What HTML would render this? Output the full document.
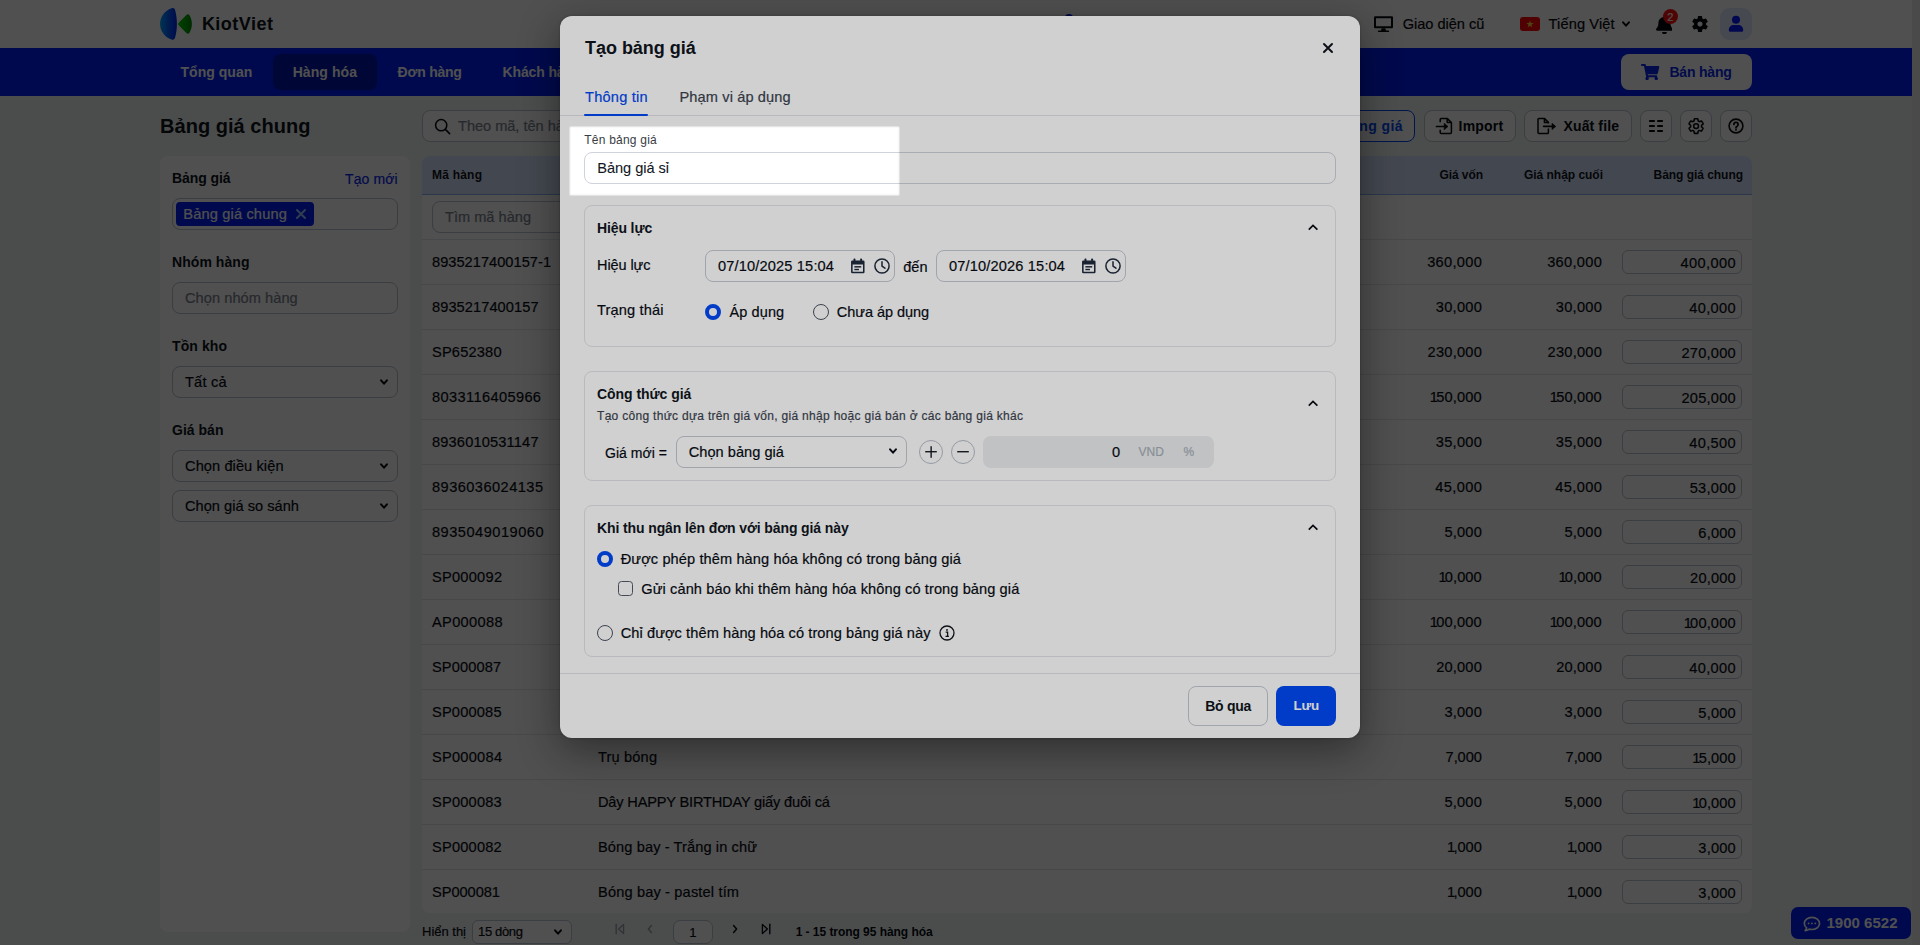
<!DOCTYPE html>
<html lang="vi"><head><meta charset="utf-8"><title>KiotViet - Bảng giá</title>
<style>

html,body{margin:0;padding:0}
body{width:1920px;height:945px;overflow:hidden;position:relative;background:#ececec;font-family:"Liberation Sans",sans-serif;font-size:14px;color:#080c14}
.a{position:absolute;display:block}
.t{white-space:nowrap;-webkit-text-stroke:0.19px currentColor}
.b{-webkit-text-stroke:0}
#app{position:absolute;left:0;top:0;width:1912px;height:945px;background:#f2f6f6;overflow:hidden}
#backdrop{position:absolute;left:0;top:0;width:1920px;height:945px;background:rgba(0,0,0,.616)}
#modal{position:absolute;left:560px;top:16px;width:800px;height:722px;background:#fff;border-radius:12px;box-shadow:0 12px 40px rgba(0,0,0,.42),0 0 3px rgba(0,0,0,.22)}
#hole{position:absolute;left:569px;top:126.4px;width:331.2px;height:69.4px;border-radius:1.5px;box-shadow:0 0 0 5000px rgba(0,0,0,.183),inset 0 0 1.6px 0.8px rgba(0,0,0,.17)}

</style></head>
<body>
<div id="app">
<div class="a" style="left:0px;top:0px;width:1912px;height:48px;background:#fff;"></div>
<svg class="a" style="left:158px;top:6px;" width="36" height="36" viewBox="0 0 36 36"><defs><linearGradient id="lg" x1="0" y1="0.5" x2="1" y2="0.5"><stop offset="0" stop-color="#00a4ff"/><stop offset="0.55" stop-color="#0058ff"/><stop offset="1" stop-color="#0026ee"/></linearGradient><linearGradient id="gg" x1="0" y1="0.5" x2="1" y2="0.5"><stop offset="0" stop-color="#00d400"/><stop offset="1" stop-color="#008c00"/></linearGradient></defs><path d="M13.6 2.3 C6.8 4.6 2.1 10.8 2.1 17.9 C2.1 25 6.8 31.2 13.6 33.5 C15.6 34.2 16.7 33.2 17.1 31.6 C19.5 23 19.5 13 17.1 4.2 C16.7 2.6 15.6 1.6 13.6 2.3 Z" fill="url(#lg)"/><path d="M20.5 17.1 L28.4 8.9 C29.4 7.9 30.8 8.1 31.5 9.3 C34.7 14.8 34.7 21.2 31.5 26.7 C30.8 27.9 29.4 28.1 28.4 27.1 L20.5 18.9 C20 18.4 20 17.6 20.5 17.1 Z" fill="url(#gg)"/></svg>
<span class="a t b" style="letter-spacing:0.473px;top:12.0px;font-size:18px;font-weight:700;color:#10151d;line-height:24px;left:201.9px;">KiotViet</span>
<svg class="a" style="left:1373px;top:15px;" width="21" height="18" viewBox="0 0 21 18"><path d="M2.2 1.2 h16.6 a1.2 1.2 0 0 1 1.2 1.2 v9.6 a1.2 1.2 0 0 1 -1.2 1.2 h-16.6 a1.2 1.2 0 0 1 -1.2 -1.2 v-9.6 a1.2 1.2 0 0 1 1.2 -1.2 z M3 3.2 v8 h15 v-8 z" fill="#080c14" fill-rule="evenodd"/><path d="M8.6 13.2 h3.8 l0.5 2.2 h-4.8 z M5.6 15.4 h9.8 a0.8 0.8 0 0 1 0 1.6 h-9.8 a0.8 0.8 0 0 1 0 -1.6 z" fill="#080c14"/></svg>
<span class="a t" style="letter-spacing:-0.023px;top:13.0px;font-size:14.6px;font-weight:400;color:#080c14;line-height:22px;left:1402.7px;">Giao diện cũ</span>
<svg class="a" style="left:1520px;top:17px;" width="20" height="14" viewBox="0 0 20 14"><rect x="0" y="0" width="20" height="14" rx="3" fill="#ff0808"/><path d="M10 3.4 l0.9 2.7 h2.8 l-2.3 1.7 l0.9 2.7 l-2.3 -1.7 l-2.3 1.7 l0.9 -2.7 l-2.3 -1.7 h2.8 z" fill="#ffda44"/></svg>
<span class="a t" style="letter-spacing:0.133px;top:13.0px;font-size:14.6px;font-weight:400;color:#080c14;line-height:22px;left:1548.5px;">Tiếng Việt</span>
<svg class="a" style="left:1620.1px;top:17.6px;" width="12" height="12" viewBox="0 0 12 12"><path d="M3.05 4.35 L6 7.65 L8.95 4.35" fill="none" stroke="#080c14" stroke-width="2.0" stroke-linecap="round" stroke-linejoin="round"/></svg>
<svg class="a" style="left:1655.6px;top:14.7px;" width="16.9" height="19.3" viewBox="0 0 448 512"><path fill="#05080d" d="M224 512c35.32 0 63.97-28.65 63.97-64H160.03c0 35.35 28.65 64 63.97 64zm215.39-149.71c-19.32-20.76-55.47-51.99-55.47-154.29 0-77.7-54.48-139.9-127.94-155.16V32c0-17.67-14.32-32-31.98-32s-31.98 14.33-31.98 32v20.84C118.56 68.1 64.08 130.3 64.08 208c0 102.3-36.15 133.53-55.47 154.29-6 6.45-8.66 14.16-8.61 21.71.11 16.4 12.98 32 32.1 32h383.8c19.12 0 32-15.6 32.1-32 .05-7.55-2.61-15.27-8.61-21.71z"/></svg>
<div class="a" style="left:1663px;top:9.3px;width:15px;height:15px;background:#ff1414;border-radius:8px;"></div>
<span class="a t" style="top:9.8px;font-size:11px;font-weight:400;color:#fff;line-height:14px;left:1667.2px;">2</span>
<svg class="a" style="left:1690px;top:14px;" width="20" height="20" viewBox="0 0 24 24"><path fill="#05080d" d="M19.14 12.94c.04-.3.06-.61.06-.94 0-.32-.02-.64-.07-.94l2.03-1.58a.49.49 0 0 0 .12-.61l-1.92-3.32a.488.488 0 0 0-.59-.22l-2.39.96c-.5-.38-1.03-.7-1.62-.94l-.36-2.54a.484.484 0 0 0-.48-.41h-3.84c-.24 0-.43.17-.47.41l-.36 2.54c-.59.24-1.13.57-1.62.94l-2.39-.96c-.22-.08-.47 0-.59.22L2.74 8.87c-.12.21-.08.47.12.61l2.03 1.58c-.05.3-.09.63-.09.94s.02.64.07.94l-2.03 1.58a.49.49 0 0 0-.12.61l1.92 3.32c.12.22.37.29.59.22l2.39-.96c.5.38 1.03.7 1.62.94l.36 2.54c.05.24.24.41.48.41h3.84c.24 0 .44-.17.47-.41l.36-2.54c.59-.24 1.13-.56 1.62-.94l2.39.96c.22.08.47 0 .59-.22l1.92-3.32c.12-.22.07-.47-.12-.61l-2.01-1.58zM12 15.1c-1.71 0-3.1-1.39-3.1-3.1s1.39-3.1 3.1-3.1 3.1 1.39 3.1 3.1-1.39 3.1-3.1 3.1z"/></svg>
<div class="a" style="left:1720px;top:8px;width:32px;height:32px;background:#e2ebff;border-radius:9px;"></div>
<svg class="a" style="left:1728px;top:16px;overflow:visible;" width="16" height="16" viewBox="0 0 16 16"><circle cx="8" cy="3.7" r="4.05" fill="#0a1eff"/><path d="M0.8 14.6 v-0.8 c0 -2.8 2.2 -4.9 5 -4.9 h4.4 c2.8 0 5 2.1 5 4.9 v0.8 a1.1 1.1 0 0 1 -1.1 1.1 h-12.2 a1.1 1.1 0 0 1 -1.1 -1.1 z" fill="#0a1eff"/></svg>
<div class="a" style="left:1064.8px;top:13.5px;width:8.4px;height:8.4px;background:#0020f8;border-radius:5px;"></div>
<div class="a" style="left:0px;top:48px;width:1912px;height:48px;background:#0020f8;"></div>
<div class="a" style="left:273px;top:54px;width:104px;height:36px;background:rgba(0,0,20,.32);border-radius:8px;"></div>
<span class="a t b" style="letter-spacing:0.032px;top:61.0px;font-size:14px;font-weight:700;color:#fff;line-height:22px;left:180.5px;">Tổng quan</span>
<span class="a t b" style="letter-spacing:0.074px;top:61.0px;font-size:14px;font-weight:700;color:#fff;line-height:22px;left:292.7px;">Hàng hóa</span>
<span class="a t b" style="letter-spacing:-0.236px;top:61.0px;font-size:14px;font-weight:700;color:#fff;line-height:22px;left:397.6px;">Đơn hàng</span>
<span class="a t b" style="letter-spacing:-0.125px;top:61.0px;font-size:14px;font-weight:700;color:#fff;line-height:22px;left:502.5px;">Khách hàng</span>
<div class="a" style="left:1621px;top:54px;width:131px;height:36px;background:#fff;border-radius:8px;"></div>
<svg class="a" style="left:1641.3px;top:63.8px;" width="18.3" height="16.3" viewBox="0 0 576 512"><path fill="#0a28f0" d="M528.12 301.319l47.273-208C578.806 78.301 567.391 64 551.99 64H159.208l-9.166-44.81C147.758 8.021 137.93 0 126.529 0H24C10.745 0 0 10.745 0 24v16c0 13.255 10.745 24 24 24h69.883l70.248 343.435C147.325 417.1 136 435.222 136 456c0 30.928 25.072 56 56 56s56-25.072 56-56c0-15.674-6.447-29.835-16.824-40h209.647C430.447 426.165 424 440.326 424 456c0 30.928 25.072 56 56 56s56-25.072 56-56c0-22.172-12.888-41.332-31.579-50.405l5.517-24.276c3.413-15.018-8.002-29.319-23.403-29.319H218.117l-6.545-32h293.145c11.206 0 20.92-7.754 23.403-18.681z"/></svg>
<span class="a t b" style="letter-spacing:-0.183px;top:61.0px;font-size:14px;font-weight:700;color:#0a28f0;line-height:22px;left:1669.4px;">Bán hàng</span>
<span class="a t b" style="letter-spacing:0.038px;top:112.0px;font-size:20px;font-weight:700;color:#10151d;line-height:28px;left:160px;">Bảng giá chung</span>
<div class="a" style="left:422px;top:110px;width:760px;height:32px;background:#fff;border-radius:8px;border:1px solid #bcc4d0;box-sizing:border-box;"></div>
<svg class="a" style="left:434px;top:118px;" width="17" height="17" viewBox="0 0 17 17"><circle cx="7.2" cy="7.2" r="5.6" fill="none" stroke="#080c14" stroke-width="1.5"/><path d="M11.4 11.4 L15.6 15.6" stroke="#080c14" stroke-width="1.6" stroke-linecap="round"/></svg>
<span class="a t" style="letter-spacing:-0.032px;top:115.0px;font-size:14.6px;font-weight:400;color:#7c8490;line-height:22px;left:458px;">Theo mã, tên hàng</span>
<div class="a" style="left:1295px;top:110px;width:120px;height:32px;background:#fff;border-radius:8px;border:1px solid #004af5;box-sizing:border-box;"></div>
<span class="a t b" style="letter-spacing:0.411px;top:115.0px;font-size:14px;font-weight:700;color:#004af5;line-height:22px;left:1340.5px;">Bảng giá</span>
<div class="a" style="left:1424px;top:110px;width:92px;height:32px;background:#fff;border-radius:8px;border:1px solid #bcc4d0;box-sizing:border-box;"></div>
<svg class="a" style="left:1434px;top:117px;" width="20" height="18" viewBox="0 0 20 18"><path d="M6.2 5.2 V2.6 a1 1 0 0 1 1 -1 h6.2 l4 4 v9.8 a1 1 0 0 1 -1 1 h-9.2 a1 1 0 0 1 -1 -1 v-2.6" fill="none" stroke="#080c14" stroke-width="1.5" stroke-linejoin="round"/><path d="M13.2 1.8 v3.8 h3.8" fill="none" stroke="#080c14" stroke-width="1.5" stroke-linejoin="round"/><path d="M2.4 9.5 H12" fill="none" stroke="#080c14" stroke-width="1.6" stroke-linecap="round"/><path d="M10.2 6.3 L14 9.5 L10.2 12.7 Z" fill="#080c14" stroke="#080c14" stroke-width="0.6" stroke-linejoin="round"/></svg>
<span class="a t b" style="letter-spacing:0.188px;top:115.0px;font-size:14px;font-weight:700;color:#080c14;line-height:22px;left:1458.6px;">Import</span>
<div class="a" style="left:1524px;top:110px;width:108px;height:32px;background:#fff;border-radius:8px;border:1px solid #bcc4d0;box-sizing:border-box;"></div>
<svg class="a" style="left:1536px;top:117px;" width="22" height="18" viewBox="0 0 22 18"><path d="M12.4 11.6 v3.8 a1 1 0 0 1 -1 1 h-8.4 a1 1 0 0 1 -1 -1 v-12.8 a1 1 0 0 1 1 -1 h5.6 l3.8 3.8 v1" fill="none" stroke="#080c14" stroke-width="1.5" stroke-linejoin="round"/><path d="M8.4 1.8 v3.8 h3.8" fill="none" stroke="#080c14" stroke-width="1.5" stroke-linejoin="round"/><path d="M7.6 9.4 H17.6" fill="none" stroke="#080c14" stroke-width="1.6" stroke-linecap="round"/><path d="M16 6.2 L19.8 9.4 L16 12.6 Z" fill="#080c14" stroke="#080c14" stroke-width="0.6" stroke-linejoin="round"/></svg>
<span class="a t b" style="letter-spacing:0.129px;top:115.0px;font-size:14px;font-weight:700;color:#080c14;line-height:22px;left:1563.5px;">Xuất file</span>
<div class="a" style="left:1640px;top:110px;width:32px;height:32px;background:#fff;border-radius:8px;border:1px solid #bcc4d0;box-sizing:border-box;"></div>
<svg class="a" style="left:1648px;top:118px;" width="16" height="16" viewBox="0 0 16 16"><rect x="1.1" y="2" width="5.7" height="2" rx="0.3" fill="#080c14"/><rect x="9.2" y="2" width="5.7" height="2" rx="0.3" fill="#080c14"/><rect x="1.1" y="7" width="5.7" height="2" rx="0.3" fill="#080c14"/><rect x="9.2" y="7" width="5.7" height="2" rx="0.3" fill="#080c14"/><rect x="1.1" y="12" width="5.7" height="2" rx="0.3" fill="#080c14"/><rect x="9.2" y="12" width="5.7" height="2" rx="0.3" fill="#080c14"/></svg>
<div class="a" style="left:1680px;top:110px;width:32px;height:32px;background:#fff;border-radius:8px;border:1px solid #bcc4d0;box-sizing:border-box;"></div>
<svg class="a" style="left:1686.5px;top:116.5px;" width="18.2" height="18.2" viewBox="0 0 24 24"><path fill="none" stroke="#080c14" stroke-width="2" stroke-linejoin="round" d="M19.14 12.94c.04-.3.06-.61.06-.94 0-.32-.02-.64-.07-.94l2.03-1.58a.49.49 0 0 0 .12-.61l-1.92-3.32a.488.488 0 0 0-.59-.22l-2.39.96c-.5-.38-1.03-.7-1.62-.94l-.36-2.54a.484.484 0 0 0-.48-.41h-3.84c-.24 0-.43.17-.47.41l-.36 2.54c-.59.24-1.13.57-1.62.94l-2.39-.96c-.22-.08-.47 0-.59.22L2.74 8.87c-.12.21-.08.47.12.61l2.03 1.58c-.05.3-.09.63-.09.94s.02.64.07.94l-2.03 1.58a.49.49 0 0 0-.12.61l1.92 3.32c.12.22.37.29.59.22l2.39-.96c.5.38 1.03.7 1.62.94l.36 2.54c.05.24.24.41.48.41h3.84c.24 0 .44-.17.47-.41l.36-2.54c.59-.24 1.13-.56 1.62-.94l2.39.96c.22.08.47 0 .59-.22l1.92-3.32c.12-.22.07-.47-.12-.61l-2.01-1.58z"/><circle cx="12" cy="12" r="3.2" fill="none" stroke="#080c14" stroke-width="2"/></svg>
<div class="a" style="left:1720px;top:110px;width:32px;height:32px;background:#fff;border-radius:8px;border:1px solid #bcc4d0;box-sizing:border-box;"></div>
<svg class="a" style="left:1728px;top:118px;" width="16" height="16" viewBox="0 0 16 16"><circle cx="8" cy="8" r="6.9" fill="none" stroke="#080c14" stroke-width="1.6"/><path d="M5.9 6.4 a2.1 2.1 0 1 1 3.2 1.8 c-0.7 0.4 -1.1 0.8 -1.1 1.6" fill="none" stroke="#080c14" stroke-width="1.8" stroke-linecap="round"/><circle cx="8" cy="11.7" r="0.95" fill="#080c14"/></svg>
<div class="a" style="left:160px;top:156px;width:250px;height:776px;background:#fff;border-radius:8px;"></div>
<span class="a t b" style="letter-spacing:-0.089px;top:168.0px;font-size:14px;font-weight:700;color:#10151d;line-height:20px;left:172px;">Bảng giá</span>
<span class="a t" style="letter-spacing:0.105px;top:167.5px;font-size:14px;font-weight:400;color:#0a28f0;line-height:22px;left:345.0px;">Tạo mới</span>
<div class="a" style="left:172px;top:198px;width:226px;height:32px;background:#fff;border-radius:8px;border:1px solid #bcc4d0;box-sizing:border-box;"></div>
<div class="a" style="left:176px;top:202px;width:138px;height:24px;background:#0020f8;border-radius:4px;"></div>
<span class="a t" style="letter-spacing:0.159px;top:203.0px;font-size:14.6px;font-weight:400;color:#fff;line-height:22px;left:183.3px;">Bảng giá chung</span>
<svg class="a" style="left:295px;top:208px;" width="12" height="12" viewBox="0 0 12 12"><path d="M2 2 L10 10 M10 2 L2 10" stroke="#9cc4ff" stroke-width="2.1" stroke-linecap="round"/></svg>
<span class="a t b" style="letter-spacing:0.062px;top:252.0px;font-size:14px;font-weight:700;color:#10151d;line-height:20px;left:172px;">Nhóm hàng</span>
<div class="a" style="left:172px;top:282px;width:226px;height:32px;background:#fff;border-radius:8px;border:1px solid #bcc4d0;box-sizing:border-box;"></div>
<span class="a t" style="letter-spacing:0.056px;top:287.0px;font-size:14.6px;font-weight:400;color:#7c8490;line-height:22px;left:185px;">Chọn nhóm hàng</span>
<span class="a t b" style="letter-spacing:0.094px;top:336.0px;font-size:14px;font-weight:700;color:#10151d;line-height:20px;left:172px;">Tồn kho</span>
<div class="a" style="left:172px;top:366px;width:226px;height:32px;background:#fff;border-radius:8px;border:1px solid #bcc4d0;box-sizing:border-box;"></div>
<span class="a t" style="letter-spacing:0.188px;top:371.0px;font-size:14.6px;font-weight:400;color:#080c14;line-height:22px;left:185px;">Tất cả</span>
<svg class="a" style="left:377.8px;top:375.5px;" width="12" height="12" viewBox="0 0 12 12"><path d="M3.05 4.35 L6 7.65 L8.95 4.35" fill="none" stroke="#080c14" stroke-width="2.0" stroke-linecap="round" stroke-linejoin="round"/></svg>
<span class="a t b" style="letter-spacing:0.023px;top:420.0px;font-size:14px;font-weight:700;color:#10151d;line-height:20px;left:172px;">Giá bán</span>
<div class="a" style="left:172px;top:450px;width:226px;height:32px;background:#fff;border-radius:8px;border:1px solid #bcc4d0;box-sizing:border-box;"></div>
<span class="a t" style="letter-spacing:0.087px;top:455.0px;font-size:14.6px;font-weight:400;color:#080c14;line-height:22px;left:185px;">Chọn điều kiện</span>
<svg class="a" style="left:377.8px;top:459.5px;" width="12" height="12" viewBox="0 0 12 12"><path d="M3.05 4.35 L6 7.65 L8.95 4.35" fill="none" stroke="#080c14" stroke-width="2.0" stroke-linecap="round" stroke-linejoin="round"/></svg>
<div class="a" style="left:172px;top:490px;width:226px;height:32px;background:#fff;border-radius:8px;border:1px solid #bcc4d0;box-sizing:border-box;"></div>
<span class="a t" style="letter-spacing:0.027px;top:495.0px;font-size:14.6px;font-weight:400;color:#080c14;line-height:22px;left:185px;">Chọn giá so sánh</span>
<svg class="a" style="left:377.8px;top:499.5px;" width="12" height="12" viewBox="0 0 12 12"><path d="M3.05 4.35 L6 7.65 L8.95 4.35" fill="none" stroke="#080c14" stroke-width="2.0" stroke-linecap="round" stroke-linejoin="round"/></svg>
<div class="a" style="left:422px;top:156px;width:1330px;height:757px;background:#fff;border-radius:8px;"></div>
<div class="a" style="left:422px;top:156px;width:1330px;height:39px;background:#d9e5ff;border-radius:8px 8px 0 0;border-bottom:1px solid #8fb2f5;box-sizing:border-box;"></div>
<span class="a t b" style="letter-spacing:0.221px;top:167.0px;font-size:12px;font-weight:700;color:#10151d;line-height:16px;left:432px;">Mã hàng</span>
<span class="a t b" style="letter-spacing:-0.192px;top:167.0px;font-size:12px;font-weight:700;color:#10151d;line-height:16px;left:598px;">Tên hàng</span>
<span class="a t b" style="letter-spacing:-0.086px;top:167.0px;font-size:12px;font-weight:700;color:#10151d;line-height:16px;left:1439.5px;">Giá vốn</span>
<span class="a t b" style="letter-spacing:-0.029px;top:167.0px;font-size:12px;font-weight:700;color:#10151d;line-height:16px;left:1524px;">Giá nhập cuối</span>
<span class="a t b" style="letter-spacing:-0.038px;top:167.0px;font-size:12px;font-weight:700;color:#10151d;line-height:16px;left:1653.5px;">Bảng giá chung</span>
<div class="a" style="left:432px;top:201px;width:156px;height:32px;background:#fff;border-radius:8px;border:1px solid #bcc4d0;box-sizing:border-box;"></div>
<span class="a t" style="letter-spacing:0.002px;top:206.0px;font-size:14.6px;font-weight:400;color:#7c8490;line-height:22px;left:445px;">Tìm mã hàng</span>
<div class="a" style="left:598px;top:201px;width:640px;height:32px;background:#fff;border-radius:8px;border:1px solid #bcc4d0;box-sizing:border-box;"></div>
<div class="a" style="left:422px;top:239px;width:1330px;height:1px;background:#e4e7eb;"></div>
<span class="a t" style="letter-spacing:0.036px;top:251.0px;font-size:14.6px;font-weight:400;color:#080c14;line-height:22px;left:432px;">8935217400157-1</span>
<span class="a t" style="top:251.0px;font-size:14.6px;font-weight:400;color:#080c14;line-height:22px;left:598px;">Bóng bay sinh nhật set vàng</span>
<span class="a t" style="letter-spacing:0.306px;top:251.0px;font-size:14.6px;font-weight:400;color:#080c14;line-height:22px;left:1427.2px;">360,000</span>
<span class="a t" style="letter-spacing:0.306px;top:251.0px;font-size:14.6px;font-weight:400;color:#080c14;line-height:22px;left:1547.2px;">360,000</span>
<div class="a" style="left:1622px;top:250px;width:120px;height:24px;background:#fff;border-radius:6px;border:1px solid #bcc4d0;box-sizing:border-box;"></div>
<span class="a t" style="letter-spacing:0.389px;top:252.0px;font-size:14.6px;font-weight:400;color:#080c14;line-height:22px;left:1680.6000000000001px;">400,000</span>
<div class="a" style="left:422px;top:284px;width:1330px;height:1px;background:#e4e7eb;"></div>
<span class="a t" style="letter-spacing:0.082px;top:296.0px;font-size:14.6px;font-weight:400;color:#080c14;line-height:22px;left:432px;">8935217400157</span>
<span class="a t" style="top:296.0px;font-size:14.6px;font-weight:400;color:#080c14;line-height:22px;left:598px;">Nến sinh nhật xoắn màu</span>
<span class="a t" style="letter-spacing:0.272px;top:296.0px;font-size:14.6px;font-weight:400;color:#080c14;line-height:22px;left:1435.8px;">30,000</span>
<span class="a t" style="letter-spacing:0.272px;top:296.0px;font-size:14.6px;font-weight:400;color:#080c14;line-height:22px;left:1555.8px;">30,000</span>
<div class="a" style="left:1622px;top:295px;width:120px;height:24px;background:#fff;border-radius:6px;border:1px solid #bcc4d0;box-sizing:border-box;"></div>
<span class="a t" style="letter-spacing:0.372px;top:297.0px;font-size:14.6px;font-weight:400;color:#080c14;line-height:22px;left:1689.2px;">40,000</span>
<div class="a" style="left:422px;top:329px;width:1330px;height:1px;background:#e4e7eb;"></div>
<span class="a t" style="letter-spacing:0.190px;top:341.0px;font-size:14.6px;font-weight:400;color:#080c14;line-height:22px;left:432px;">SP652380</span>
<span class="a t" style="top:341.0px;font-size:14.6px;font-weight:400;color:#080c14;line-height:22px;left:598px;">Set trang trí sinh nhật công chúa</span>
<span class="a t" style="letter-spacing:0.239px;top:341.0px;font-size:14.6px;font-weight:400;color:#080c14;line-height:22px;left:1427.6px;">230,000</span>
<span class="a t" style="letter-spacing:0.239px;top:341.0px;font-size:14.6px;font-weight:400;color:#080c14;line-height:22px;left:1547.6px;">230,000</span>
<div class="a" style="left:1622px;top:340px;width:120px;height:24px;background:#fff;border-radius:6px;border:1px solid #bcc4d0;box-sizing:border-box;"></div>
<span class="a t" style="letter-spacing:0.239px;top:342.0px;font-size:14.6px;font-weight:400;color:#080c14;line-height:22px;left:1681.5px;">270,000</span>
<div class="a" style="left:422px;top:374px;width:1330px;height:1px;background:#e4e7eb;"></div>
<span class="a t" style="letter-spacing:0.380px;top:386.0px;font-size:14.6px;font-weight:400;color:#080c14;line-height:22px;left:432px;">8033116405966</span>
<span class="a t" style="top:386.0px;font-size:14.6px;font-weight:400;color:#080c14;line-height:22px;left:598px;">Bóng số nhũ vàng 80cm</span>
<span class="a t" style="letter-spacing:0.156px;top:386.0px;font-size:14.6px;font-weight:400;color:#080c14;line-height:22px;left:1429.8px;"><span style="letter-spacing:-1.7px">1</span>50,000</span>
<span class="a t" style="letter-spacing:0.156px;top:386.0px;font-size:14.6px;font-weight:400;color:#080c14;line-height:22px;left:1549.8px;"><span style="letter-spacing:-1.7px">1</span>50,000</span>
<div class="a" style="left:1622px;top:385px;width:120px;height:24px;background:#fff;border-radius:6px;border:1px solid #bcc4d0;box-sizing:border-box;"></div>
<span class="a t" style="letter-spacing:0.239px;top:387.0px;font-size:14.6px;font-weight:400;color:#080c14;line-height:22px;left:1681.5px;">205,000</span>
<div class="a" style="left:422px;top:419px;width:1330px;height:1px;background:#e4e7eb;"></div>
<span class="a t" style="letter-spacing:0.172px;top:431.0px;font-size:14.6px;font-weight:400;color:#080c14;line-height:22px;left:432px;">8936010531147</span>
<span class="a t" style="top:431.0px;font-size:14.6px;font-weight:400;color:#080c14;line-height:22px;left:598px;">Pháo giấy kim tuyến</span>
<span class="a t" style="letter-spacing:0.272px;top:431.0px;font-size:14.6px;font-weight:400;color:#080c14;line-height:22px;left:1435.8px;">35,000</span>
<span class="a t" style="letter-spacing:0.272px;top:431.0px;font-size:14.6px;font-weight:400;color:#080c14;line-height:22px;left:1555.8px;">35,000</span>
<div class="a" style="left:1622px;top:430px;width:120px;height:24px;background:#fff;border-radius:6px;border:1px solid #bcc4d0;box-sizing:border-box;"></div>
<span class="a t" style="letter-spacing:0.372px;top:432.0px;font-size:14.6px;font-weight:400;color:#080c14;line-height:22px;left:1689.2px;">40,500</span>
<div class="a" style="left:422px;top:464px;width:1330px;height:1px;background:#e4e7eb;"></div>
<span class="a t" style="letter-spacing:0.457px;top:476.0px;font-size:14.6px;font-weight:400;color:#080c14;line-height:22px;left:432px;">8936036024135</span>
<span class="a t" style="top:476.0px;font-size:14.6px;font-weight:400;color:#080c14;line-height:22px;left:598px;">Mũ sinh nhật giấy (10 cái)</span>
<span class="a t" style="letter-spacing:0.372px;top:476.0px;font-size:14.6px;font-weight:400;color:#080c14;line-height:22px;left:1435.3px;">45,000</span>
<span class="a t" style="letter-spacing:0.372px;top:476.0px;font-size:14.6px;font-weight:400;color:#080c14;line-height:22px;left:1555.3px;">45,000</span>
<div class="a" style="left:1622px;top:475px;width:120px;height:24px;background:#fff;border-radius:6px;border:1px solid #bcc4d0;box-sizing:border-box;"></div>
<span class="a t" style="letter-spacing:0.272px;top:477.0px;font-size:14.6px;font-weight:400;color:#080c14;line-height:22px;left:1689.7px;">53,000</span>
<div class="a" style="left:422px;top:509px;width:1330px;height:1px;background:#e4e7eb;"></div>
<span class="a t" style="letter-spacing:0.499px;top:521.0px;font-size:14.6px;font-weight:400;color:#080c14;line-height:22px;left:432px;">8935049019060</span>
<span class="a t" style="top:521.0px;font-size:14.6px;font-weight:400;color:#080c14;line-height:22px;left:598px;">Que nến số</span>
<span class="a t" style="letter-spacing:0.217px;top:521.0px;font-size:14.6px;font-weight:400;color:#080c14;line-height:22px;left:1444.3999999999999px;">5,000</span>
<span class="a t" style="letter-spacing:0.217px;top:521.0px;font-size:14.6px;font-weight:400;color:#080c14;line-height:22px;left:1564.3999999999999px;">5,000</span>
<div class="a" style="left:1622px;top:520px;width:120px;height:24px;background:#fff;border-radius:6px;border:1px solid #bcc4d0;box-sizing:border-box;"></div>
<span class="a t" style="letter-spacing:0.217px;top:522.0px;font-size:14.6px;font-weight:400;color:#080c14;line-height:22px;left:1698.3px;">6,000</span>
<div class="a" style="left:422px;top:554px;width:1330px;height:1px;background:#e4e7eb;"></div>
<span class="a t" style="letter-spacing:0.261px;top:566.0px;font-size:14.6px;font-weight:400;color:#080c14;line-height:22px;left:432px;">SP000092</span>
<span class="a t" style="top:566.0px;font-size:14.6px;font-weight:400;color:#080c14;line-height:22px;left:598px;">Bóng chữ HAPPY BIRTHDAY</span>
<span class="a t" style="letter-spacing:0.089px;top:566.0px;font-size:14.6px;font-weight:400;color:#080c14;line-height:22px;left:1438.3999999999999px;"><span style="letter-spacing:-1.7px">1</span>0,000</span>
<span class="a t" style="letter-spacing:0.089px;top:566.0px;font-size:14.6px;font-weight:400;color:#080c14;line-height:22px;left:1558.3999999999999px;"><span style="letter-spacing:-1.7px">1</span>0,000</span>
<div class="a" style="left:1622px;top:565px;width:120px;height:24px;background:#fff;border-radius:6px;border:1px solid #bcc4d0;box-sizing:border-box;"></div>
<span class="a t" style="letter-spacing:0.192px;top:567.0px;font-size:14.6px;font-weight:400;color:#080c14;line-height:22px;left:1690.1000000000001px;">20,000</span>
<div class="a" style="left:422px;top:599px;width:1330px;height:1px;background:#e4e7eb;"></div>
<span class="a t" style="letter-spacing:0.333px;top:611.0px;font-size:14.6px;font-weight:400;color:#080c14;line-height:22px;left:432px;">AP000088</span>
<span class="a t" style="top:611.0px;font-size:14.6px;font-weight:400;color:#080c14;line-height:22px;left:598px;">Bơm bóng điện 2 vòi</span>
<span class="a t" style="letter-spacing:0.156px;top:611.0px;font-size:14.6px;font-weight:400;color:#080c14;line-height:22px;left:1429.8px;"><span style="letter-spacing:-1.7px">1</span>00,000</span>
<span class="a t" style="letter-spacing:0.156px;top:611.0px;font-size:14.6px;font-weight:400;color:#080c14;line-height:22px;left:1549.8px;"><span style="letter-spacing:-1.7px">1</span>00,000</span>
<div class="a" style="left:1622px;top:610px;width:120px;height:24px;background:#fff;border-radius:6px;border:1px solid #bcc4d0;box-sizing:border-box;"></div>
<span class="a t" style="letter-spacing:0.156px;top:612.0px;font-size:14.6px;font-weight:400;color:#080c14;line-height:22px;left:1683.7px;"><span style="letter-spacing:-1.7px">1</span>00,000</span>
<div class="a" style="left:422px;top:644px;width:1330px;height:1px;background:#e4e7eb;"></div>
<span class="a t" style="letter-spacing:0.118px;top:656.0px;font-size:14.6px;font-weight:400;color:#080c14;line-height:22px;left:432px;">SP000087</span>
<span class="a t" style="top:656.0px;font-size:14.6px;font-weight:400;color:#080c14;line-height:22px;left:598px;">Rèm kim tuyến trang trí</span>
<span class="a t" style="letter-spacing:0.192px;top:656.0px;font-size:14.6px;font-weight:400;color:#080c14;line-height:22px;left:1436.2px;">20,000</span>
<span class="a t" style="letter-spacing:0.192px;top:656.0px;font-size:14.6px;font-weight:400;color:#080c14;line-height:22px;left:1556.2px;">20,000</span>
<div class="a" style="left:1622px;top:655px;width:120px;height:24px;background:#fff;border-radius:6px;border:1px solid #bcc4d0;box-sizing:border-box;"></div>
<span class="a t" style="letter-spacing:0.372px;top:657.0px;font-size:14.6px;font-weight:400;color:#080c14;line-height:22px;left:1689.2px;">40,000</span>
<div class="a" style="left:422px;top:689px;width:1330px;height:1px;background:#e4e7eb;"></div>
<span class="a t" style="letter-spacing:0.190px;top:701.0px;font-size:14.6px;font-weight:400;color:#080c14;line-height:22px;left:432px;">SP000085</span>
<span class="a t" style="top:701.0px;font-size:14.6px;font-weight:400;color:#080c14;line-height:22px;left:598px;">Keo dán bóng</span>
<span class="a t" style="letter-spacing:0.217px;top:701.0px;font-size:14.6px;font-weight:400;color:#080c14;line-height:22px;left:1444.3999999999999px;">3,000</span>
<span class="a t" style="letter-spacing:0.217px;top:701.0px;font-size:14.6px;font-weight:400;color:#080c14;line-height:22px;left:1564.3999999999999px;">3,000</span>
<div class="a" style="left:1622px;top:700px;width:120px;height:24px;background:#fff;border-radius:6px;border:1px solid #bcc4d0;box-sizing:border-box;"></div>
<span class="a t" style="letter-spacing:0.217px;top:702.0px;font-size:14.6px;font-weight:400;color:#080c14;line-height:22px;left:1698.3px;">5,000</span>
<div class="a" style="left:422px;top:734px;width:1330px;height:1px;background:#e4e7eb;"></div>
<span class="a t" style="letter-spacing:0.261px;top:746.0px;font-size:14.6px;font-weight:400;color:#080c14;line-height:22px;left:432px;">SP000084</span>
<span class="a t" style="letter-spacing:0.161px;top:746.0px;font-size:14.6px;font-weight:400;color:#080c14;line-height:22px;left:598px;">Trụ bóng</span>
<span class="a t" style="letter-spacing:-0.083px;top:746.0px;font-size:14.6px;font-weight:400;color:#080c14;line-height:22px;left:1445.6px;">7,000</span>
<span class="a t" style="letter-spacing:-0.083px;top:746.0px;font-size:14.6px;font-weight:400;color:#080c14;line-height:22px;left:1565.6px;">7,000</span>
<div class="a" style="left:1622px;top:745px;width:120px;height:24px;background:#fff;border-radius:6px;border:1px solid #bcc4d0;box-sizing:border-box;"></div>
<span class="a t" style="letter-spacing:0.089px;top:747.0px;font-size:14.6px;font-weight:400;color:#080c14;line-height:22px;left:1692.3px;"><span style="letter-spacing:-1.7px">1</span>5,000</span>
<div class="a" style="left:422px;top:779px;width:1330px;height:1px;background:#e4e7eb;"></div>
<span class="a t" style="letter-spacing:0.218px;top:791.0px;font-size:14.6px;font-weight:400;color:#080c14;line-height:22px;left:432px;">SP000083</span>
<span class="a t" style="letter-spacing:-0.180px;top:791.0px;font-size:14.6px;font-weight:400;color:#080c14;line-height:22px;left:598px;">Dây HAPPY BIRTHDAY giấy đuôi cá</span>
<span class="a t" style="letter-spacing:0.217px;top:791.0px;font-size:14.6px;font-weight:400;color:#080c14;line-height:22px;left:1444.3999999999999px;">5,000</span>
<span class="a t" style="letter-spacing:0.217px;top:791.0px;font-size:14.6px;font-weight:400;color:#080c14;line-height:22px;left:1564.3999999999999px;">5,000</span>
<div class="a" style="left:1622px;top:790px;width:120px;height:24px;background:#fff;border-radius:6px;border:1px solid #bcc4d0;box-sizing:border-box;"></div>
<span class="a t" style="letter-spacing:0.089px;top:792.0px;font-size:14.6px;font-weight:400;color:#080c14;line-height:22px;left:1692.3px;"><span style="letter-spacing:-1.7px">1</span>0,000</span>
<div class="a" style="left:422px;top:824px;width:1330px;height:1px;background:#e4e7eb;"></div>
<span class="a t" style="letter-spacing:0.218px;top:836.0px;font-size:14.6px;font-weight:400;color:#080c14;line-height:22px;left:432px;">SP000082</span>
<span class="a t" style="letter-spacing:0.109px;top:836.0px;font-size:14.6px;font-weight:400;color:#080c14;line-height:22px;left:598px;">Bóng bay - Trắng in chữ</span>
<span class="a t" style="letter-spacing:-0.007px;top:836.0px;font-size:14.6px;font-weight:400;color:#080c14;line-height:22px;left:1447.0px;"><span style="letter-spacing:-1.7px">1</span>,000</span>
<span class="a t" style="letter-spacing:-0.007px;top:836.0px;font-size:14.6px;font-weight:400;color:#080c14;line-height:22px;left:1567.0px;"><span style="letter-spacing:-1.7px">1</span>,000</span>
<div class="a" style="left:1622px;top:835px;width:120px;height:24px;background:#fff;border-radius:6px;border:1px solid #bcc4d0;box-sizing:border-box;"></div>
<span class="a t" style="letter-spacing:0.217px;top:837.0px;font-size:14.6px;font-weight:400;color:#080c14;line-height:22px;left:1698.3px;">3,000</span>
<div class="a" style="left:422px;top:869px;width:1330px;height:1px;background:#e4e7eb;"></div>
<span class="a t" style="letter-spacing:-0.025px;top:881.0px;font-size:14.6px;font-weight:400;color:#080c14;line-height:22px;left:432px;">SP000081</span>
<span class="a t" style="letter-spacing:0.155px;top:881.0px;font-size:14.6px;font-weight:400;color:#080c14;line-height:22px;left:598px;">Bóng bay - pastel tím</span>
<span class="a t" style="letter-spacing:-0.007px;top:881.0px;font-size:14.6px;font-weight:400;color:#080c14;line-height:22px;left:1447.0px;"><span style="letter-spacing:-1.7px">1</span>,000</span>
<span class="a t" style="letter-spacing:-0.007px;top:881.0px;font-size:14.6px;font-weight:400;color:#080c14;line-height:22px;left:1567.0px;"><span style="letter-spacing:-1.7px">1</span>,000</span>
<div class="a" style="left:1622px;top:880px;width:120px;height:24px;background:#fff;border-radius:6px;border:1px solid #bcc4d0;box-sizing:border-box;"></div>
<span class="a t" style="letter-spacing:0.217px;top:882.0px;font-size:14.6px;font-weight:400;color:#080c14;line-height:22px;left:1698.3px;">3,000</span>
<span class="a t" style="letter-spacing:-0.011px;top:923.0px;font-size:13px;font-weight:400;color:#080c14;line-height:18px;left:422px;">Hiển thị</span>
<div class="a" style="left:472px;top:920px;width:100px;height:24px;background:#fff;border-radius:6px;border:1px solid #bcc4d0;box-sizing:border-box;"></div>
<span class="a t" style="letter-spacing:-0.333px;top:923.0px;font-size:13px;font-weight:400;color:#080c14;line-height:18px;left:478px;">15 dòng</span>
<svg class="a" style="left:552.4px;top:925.8px;" width="12" height="12" viewBox="0 0 12 12"><path d="M3.05 4.35 L6 7.65 L8.95 4.35" fill="none" stroke="#080c14" stroke-width="2.0" stroke-linecap="round" stroke-linejoin="round"/></svg>
<svg class="a" style="left:614px;top:923.4px;" width="12" height="12" viewBox="0 0 12 12"><path d="M2.2 1.2 V10.8" stroke="#9aa1ab" stroke-width="1.4" stroke-linecap="round"/><path d="M9.6 1.4 L4.6 6 L9.6 10.6 Z" fill="none" stroke="#9aa1ab" stroke-width="1.3" stroke-linejoin="round"/></svg>
<svg class="a" style="left:644px;top:923.4px;" width="12" height="12" viewBox="0 0 12 12"><path d="M7.4 2.6 L4.4 6 L7.4 9.4" fill="none" stroke="#9aa1ab" stroke-width="1.5" stroke-linecap="round" stroke-linejoin="round"/></svg>
<div class="a" style="left:673px;top:920px;width:40px;height:24px;background:#fff;border-radius:7px;border:1px solid #bcc4d0;box-sizing:border-box;"></div>
<span class="a t" style="top:924.0px;font-size:13px;font-weight:400;color:#080c14;line-height:18px;left:689.2px;">1</span>
<svg class="a" style="left:729.4px;top:923.4px;" width="12" height="12" viewBox="0 0 12 12"><path d="M4.6 2.6 L7.6 6 L4.6 9.4" fill="none" stroke="#080c14" stroke-width="1.5" stroke-linecap="round" stroke-linejoin="round"/></svg>
<svg class="a" style="left:759.7px;top:923.4px;" width="12" height="12" viewBox="0 0 12 12"><path d="M9.8 1.2 V10.8" stroke="#080c14" stroke-width="1.4" stroke-linecap="round"/><path d="M2.4 1.4 L7.4 6 L2.4 10.6 Z" fill="none" stroke="#080c14" stroke-width="1.3" stroke-linejoin="round"/></svg>
<span class="a t b" style="letter-spacing:-0.045px;top:924.0px;font-size:12px;font-weight:700;color:#080c14;line-height:16px;left:795.7px;">1 - 15 trong 95 hàng hóa</span>
<div class="a" style="left:1791px;top:907px;width:120px;height:32px;background:#0020f8;border-radius:7px;"></div>
<svg class="a" style="left:1803.4px;top:915.6px;" width="18.6" height="16.7" viewBox="0 0 20 18"><path d="M9.6 1.4 c4.6 0 8.2 2.9 8.2 6.6 s-3.6 6.6 -8.2 6.6 c-1 0 -2 -0.15 -2.9 -0.4 c-1.1 0.8 -2.6 1.5 -4.4 1.6 c0.8 -0.9 1.4 -1.9 1.6 -2.9 c-1.5 -1.2 -2.5 -2.9 -2.5 -4.9 c0 -3.7 3.6 -6.6 8.2 -6.6 z" fill="none" stroke="#fff" stroke-width="1.8" stroke-linejoin="round"/><circle cx="6" cy="8" r="1" fill="#fff"/><circle cx="9.6" cy="8" r="1" fill="#fff"/><circle cx="13.2" cy="8" r="1" fill="#fff"/></svg>
<span class="a t b" style="letter-spacing:0.012px;top:912.0px;font-size:15px;font-weight:700;color:#fff;line-height:22px;left:1826.5px;">1900 6522</span>
</div>
<div id="backdrop"></div>
<div id="modal">
<span class="a t b" style="letter-spacing:-0.029px;top:20.0px;font-size:18px;font-weight:700;color:#10151d;line-height:24px;left:25px;">Tạo bảng giá</span>
<svg class="a" style="left:761px;top:25px;" width="14" height="14" viewBox="0 0 14 14"><path d="M3 3 L11 11 M11 3 L3 11" stroke="#10151d" stroke-width="2" stroke-linecap="round"/></svg>
<span class="a t" style="letter-spacing:0.230px;top:70.0px;font-size:14.6px;font-weight:400;color:#004af5;line-height:22px;left:25px;">Thông tin</span>
<span class="a t" style="letter-spacing:0.119px;top:70.0px;font-size:14.6px;font-weight:400;color:#3c4450;line-height:22px;left:119.5px;">Phạm vi áp dụng</span>
<div class="a" style="left:0px;top:99px;width:800px;height:1px;background:#dfe2e6;"></div>
<div class="a" style="left:24px;top:97.5px;width:64px;height:2.5px;background:#004af5;border-radius:1px;"></div>
<span class="a t" style="letter-spacing:0.213px;top:116.0px;font-size:12px;font-weight:400;color:#383c44;line-height:16px;left:24.299999999999955px;-webkit-text-stroke:0;">Tên bảng giá</span>
<div class="a" style="left:24px;top:136px;width:752px;height:32px;background:#fff;border-radius:8px;border:1px solid #cfd4dc;box-sizing:border-box;"></div>
<span class="a t" style="letter-spacing:-0.052px;top:141.0px;font-size:14.6px;font-weight:400;color:#121824;line-height:22px;left:37.299999999999955px;-webkit-text-stroke:0.08px currentColor;">Bảng giá sỉ</span>
<div class="a" style="left:24px;top:189px;width:752px;height:142px;background:#fff;border-radius:8px;border:1px solid #e2e5e9;box-sizing:border-box;"></div>
<span class="a t b" style="letter-spacing:-0.121px;top:202.0px;font-size:14px;font-weight:700;color:#10151d;line-height:20px;left:37px;">Hiệu lực</span>
<svg class="a" style="left:747.2px;top:205.4px;" width="12" height="12" viewBox="0 0 12 12"><path d="M1.8 8.7 L6 4.5 L10.4 8.7" fill="none" stroke="#080c14" stroke-width="1.65" stroke-linecap="butt" stroke-linejoin="miter"/></svg>
<span class="a t" style="letter-spacing:-0.076px;top:238.0px;font-size:14.5px;font-weight:400;color:#080c14;line-height:22px;left:37px;">Hiệu lực</span>
<div class="a" style="left:145px;top:234px;width:190px;height:32px;background:#fff;border-radius:8px;border:1px solid #c5cbd3;box-sizing:border-box;"></div>
<span class="a t" style="letter-spacing:0.158px;top:239.0px;font-size:14.6px;font-weight:400;color:#080c14;line-height:22px;left:158px;">07/10/2025 15:04</span>
<svg class="a" style="left:290.29999999999995px;top:241.60000000000002px;" width="15.6" height="16.6" viewBox="0 0 15 16"><path d="M2.2 2.4 h10.6 a1.2 1.2 0 0 1 1.2 1.2 v10 a1.2 1.2 0 0 1 -1.2 1.2 h-10.6 a1.2 1.2 0 0 1 -1.2 -1.2 v-10 a1.2 1.2 0 0 1 1.2 -1.2 z M2.5 6.2 v7.1 h10 v-7.1 z" fill="#1e2a3c" fill-rule="evenodd"/><rect x="3.4" y="0.6" width="1.8" height="3" rx="0.6" fill="#1e2a3c"/><rect x="9.8" y="0.6" width="1.8" height="3" rx="0.6" fill="#1e2a3c"/><rect x="4.2" y="7.8" width="6.6" height="1.4" fill="#1e2a3c"/><rect x="4.2" y="10.4" width="4.4" height="1.4" fill="#1e2a3c"/></svg>
<svg class="a" style="left:314px;top:242px;" width="16" height="16" viewBox="0 0 16 16"><circle cx="8" cy="8" r="7.1" fill="none" stroke="#1e2a3c" stroke-width="1.5"/><path d="M8 3.8 V8.2 L10.9 10.2" fill="none" stroke="#1e2a3c" stroke-width="1.5" stroke-linecap="round" stroke-linejoin="round"/></svg>
<div class="a" style="left:376px;top:234px;width:190px;height:32px;background:#fff;border-radius:8px;border:1px solid #c5cbd3;box-sizing:border-box;"></div>
<span class="a t" style="letter-spacing:0.158px;top:239.0px;font-size:14.6px;font-weight:400;color:#080c14;line-height:22px;left:389px;">07/10/2026 15:04</span>
<svg class="a" style="left:521.3px;top:241.60000000000002px;" width="15.6" height="16.6" viewBox="0 0 15 16"><path d="M2.2 2.4 h10.6 a1.2 1.2 0 0 1 1.2 1.2 v10 a1.2 1.2 0 0 1 -1.2 1.2 h-10.6 a1.2 1.2 0 0 1 -1.2 -1.2 v-10 a1.2 1.2 0 0 1 1.2 -1.2 z M2.5 6.2 v7.1 h10 v-7.1 z" fill="#1e2a3c" fill-rule="evenodd"/><rect x="3.4" y="0.6" width="1.8" height="3" rx="0.6" fill="#1e2a3c"/><rect x="9.8" y="0.6" width="1.8" height="3" rx="0.6" fill="#1e2a3c"/><rect x="4.2" y="7.8" width="6.6" height="1.4" fill="#1e2a3c"/><rect x="4.2" y="10.4" width="4.4" height="1.4" fill="#1e2a3c"/></svg>
<svg class="a" style="left:545px;top:242px;" width="16" height="16" viewBox="0 0 16 16"><circle cx="8" cy="8" r="7.1" fill="none" stroke="#1e2a3c" stroke-width="1.5"/><path d="M8 3.8 V8.2 L10.9 10.2" fill="none" stroke="#1e2a3c" stroke-width="1.5" stroke-linecap="round" stroke-linejoin="round"/></svg>
<span class="a t" style="letter-spacing:-0.002px;top:240.0px;font-size:14.5px;font-weight:400;color:#080c14;line-height:22px;left:343.29999999999995px;">đến</span>
<span class="a t" style="letter-spacing:0.159px;top:283.0px;font-size:14.6px;font-weight:400;color:#080c14;line-height:22px;left:37px;">Trạng thái</span>
<div class="a" style="left:145px;top:288px;width:16px;height:16px;background:#fff;border-radius:8px;border:4.5px solid #004af5;box-sizing:border-box;"></div>
<span class="a t" style="letter-spacing:0.078px;top:285.0px;font-size:14.5px;font-weight:400;color:#080c14;line-height:22px;left:169.60000000000002px;">Áp dụng</span>
<div class="a" style="left:252.5px;top:288px;width:16px;height:16px;background:#fff;border-radius:8px;border:1px solid #4a5360;box-sizing:border-box;"></div>
<span class="a t" style="letter-spacing:-0.050px;top:285.0px;font-size:14.5px;font-weight:400;color:#080c14;line-height:22px;left:276.79999999999995px;">Chưa áp dụng</span>
<div class="a" style="left:24px;top:355px;width:752px;height:110px;background:#fff;border-radius:8px;border:1px solid #e2e5e9;box-sizing:border-box;"></div>
<span class="a t b" style="letter-spacing:-0.052px;top:368.0px;font-size:14px;font-weight:700;color:#10151d;line-height:20px;left:37px;">Công thức giá</span>
<span class="a t" style="letter-spacing:0.303px;top:391.5px;font-size:12px;font-weight:400;color:#3c4450;line-height:16px;left:37px;">Tạo công thức dựa trên giá vốn, giá nhập hoặc giá bán ở các bảng giá khác</span>
<svg class="a" style="left:747.2px;top:381.4px;" width="12" height="12" viewBox="0 0 12 12"><path d="M1.8 8.7 L6 4.5 L10.4 8.7" fill="none" stroke="#080c14" stroke-width="1.65" stroke-linecap="butt" stroke-linejoin="miter"/></svg>
<span class="a t" style="letter-spacing:0.037px;top:426.0px;font-size:14px;font-weight:400;color:#080c14;line-height:22px;left:45px;">Giá mới =</span>
<div class="a" style="left:116px;top:420px;width:231px;height:32px;background:#fff;border-radius:8px;border:1px solid #c5cbd3;box-sizing:border-box;"></div>
<span class="a t" style="letter-spacing:0.012px;top:425.0px;font-size:14.6px;font-weight:400;color:#080c14;line-height:22px;left:128.79999999999995px;">Chọn bảng giá</span>
<svg class="a" style="left:326.79999999999995px;top:429px;" width="12" height="12" viewBox="0 0 12 12"><path d="M3.05 4.35 L6 7.65 L8.95 4.35" fill="none" stroke="#080c14" stroke-width="2.0" stroke-linecap="round" stroke-linejoin="round"/></svg>
<div class="a" style="left:358.79999999999995px;top:424px;width:24px;height:24px;background:#fff;border-radius:12px;border:1px solid #b7bdc7;box-sizing:border-box;"></div>
<svg class="a" style="left:363px;top:428px;" width="16" height="16" viewBox="0 0 16 16"><rect x="2.2" y="7.05" width="11.6" height="1.35" fill="#10151d"/><rect x="7.45" y="2.2" width="1.35" height="11.6" fill="#10151d"/></svg>
<div class="a" style="left:390.6px;top:424px;width:24px;height:24px;background:#fff;border-radius:12px;border:1px solid #b7bdc7;box-sizing:border-box;"></div>
<svg class="a" style="left:395px;top:428px;" width="16" height="16" viewBox="0 0 16 16"><rect x="2.2" y="7.05" width="11.6" height="1.35" fill="#10151d"/></svg>
<div class="a" style="left:423px;top:420px;width:231px;height:32px;background:#eceef1;border-radius:8px;"></div>
<span class="a t" style="letter-spacing:0.475px;top:424.8px;font-size:14.6px;font-weight:400;color:#080c14;line-height:22px;left:552.1px;">0</span>
<span class="a t" style="letter-spacing:0.128px;top:428.0px;font-size:12px;font-weight:400;color:#a9afb8;line-height:16px;left:578.4000000000001px;">VND</span>
<span class="a t" style="letter-spacing:0.228px;top:428.0px;font-size:12px;font-weight:400;color:#a9afb8;line-height:16px;left:623.5px;">%</span>
<div class="a" style="left:24px;top:489px;width:752px;height:152px;background:#fff;border-radius:8px;border:1px solid #e2e5e9;box-sizing:border-box;"></div>
<span class="a t b" style="letter-spacing:-0.108px;top:502.0px;font-size:14px;font-weight:700;color:#10151d;line-height:20px;left:37px;">Khi thu ngân lên đơn với bảng giá này</span>
<svg class="a" style="left:747.2px;top:505.4px;" width="12" height="12" viewBox="0 0 12 12"><path d="M1.8 8.7 L6 4.5 L10.4 8.7" fill="none" stroke="#080c14" stroke-width="1.65" stroke-linecap="butt" stroke-linejoin="miter"/></svg>
<div class="a" style="left:37.10000000000002px;top:535px;width:16px;height:16px;background:#fff;border-radius:8px;border:4.5px solid #004af5;box-sizing:border-box;"></div>
<span class="a t" style="letter-spacing:0.098px;top:532.0px;font-size:14.6px;font-weight:400;color:#080c14;line-height:22px;left:60.700000000000045px;">Được phép thêm hàng hóa không có trong bảng giá</span>
<div class="a" style="left:58px;top:565.3px;width:14.5px;height:14.5px;background:#fff;border-radius:3.5px;border:1.4px solid #555d69;box-sizing:border-box;"></div>
<span class="a t" style="letter-spacing:0.089px;top:562.0px;font-size:14.6px;font-weight:400;color:#080c14;line-height:22px;left:81.29999999999995px;">Gửi cảnh báo khi thêm hàng hóa không có trong bảng giá</span>
<div class="a" style="left:37.10000000000002px;top:609px;width:16px;height:16px;background:#fff;border-radius:8px;border:1px solid #4a5360;box-sizing:border-box;"></div>
<span class="a t" style="letter-spacing:0.075px;top:606.0px;font-size:14.6px;font-weight:400;color:#080c14;line-height:22px;left:60.700000000000045px;">Chỉ được thêm hàng hóa có trong bảng giá này</span>
<svg class="a" style="left:379px;top:609px;" width="16" height="16" viewBox="0 0 16 16"><circle cx="8" cy="8" r="7" fill="none" stroke="#10151d" stroke-width="1.3"/><path d="M6.7 7.2 h1.9 v4 M6.5 11.4 h3.4" fill="none" stroke="#10151d" stroke-width="1.3"/><circle cx="8" cy="4.9" r="0.95" fill="#10151d"/></svg>
<div class="a" style="left:0px;top:657px;width:800px;height:1px;background:#dfe2e6;"></div>
<div class="a" style="left:628px;top:670px;width:80px;height:40px;background:#fff;border-radius:8px;border:1px solid #c5cbd3;box-sizing:border-box;"></div>
<span class="a t b" style="letter-spacing:-0.311px;top:679.0px;font-size:14px;font-weight:700;color:#10151d;line-height:22px;left:645.3px;">Bỏ qua</span>
<div class="a" style="left:716px;top:670px;width:60px;height:40px;background:#004af5;border-radius:8px;"></div>
<span class="a t b" style="letter-spacing:-0.231px;top:679.0px;font-size:13.4px;font-weight:700;color:#fff;line-height:22px;left:733.5999999999999px;">Lưu</span>
</div>
<div id="hole"></div>
</body></html>
